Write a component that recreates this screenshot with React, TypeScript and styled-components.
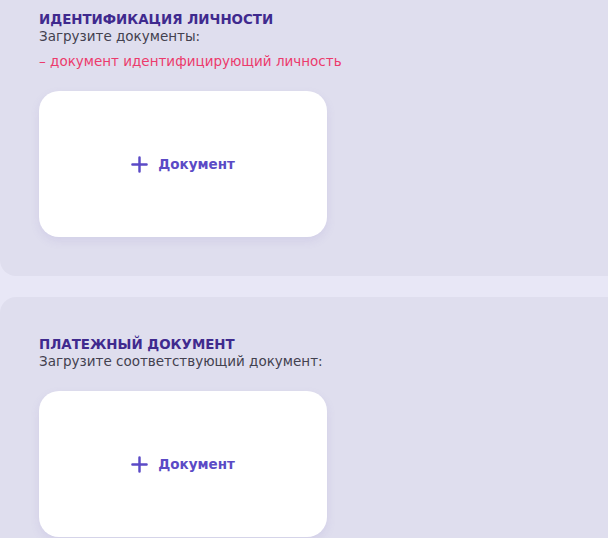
import styled, {createGlobalStyle} from "styled-components"

const GlobalStyle = createGlobalStyle`
  html, body {
    margin: 0;
    padding: 0;
    background: #e8e7f6;
    overflow: hidden;
  }
  body {
    font-family: "DejaVu Sans", "Noto Sans", sans-serif;
  }
`

const Page = styled.div`
  display: flex;
  flex-direction: column;
  gap: 21px;
  margin-right: -40px;
`

interface IPanelProps {
  $first?: boolean;
}

const Panel = styled.section<IPanelProps>`
  background: #dfdeee;
  border-radius: 16px;
  margin-top: ${({$first}) => $first ? "-28px" : "0"};
  padding: 40px 39px 39px;
`

const Title = styled.h2`
  color: #3f2a8e;
  font-size: 13.4px;
  font-weight: 700;
  line-height: 16px;
  margin: 0;
`

const Hint = styled.p`
  color: #43414f;
  font-size: 13.5px;
  line-height: 16px;
  margin: 0;
`

const Required = styled.p`
  color: #ec3a6c;
  font-size: 13.5px;
  line-height: 16px;
  margin: 9px 0 0;
`

const Uploads = styled.div`
  display: flex;
  gap: 16px;
  margin-top: 22px;
`

const UploadCard = styled.button`
  align-items: center;
  background: #ffffff;
  border: none;
  border-radius: 20px;
  box-shadow: 0 4px 10px rgba(120, 110, 190, 0.12);
  color: #5b4ac6;
  cursor: pointer;
  display: flex;
  font-family: inherit;
  font-size: 13.5px;
  font-weight: 700;
  gap: 10px;
  height: 146px;
  justify-content: center;
  padding: 0;
  width: 288px;
`

const PlusIcon = () => (
  <svg width="17" height="17" viewBox="0 0 18 18" fill="none">
    <path d="M9 1.5v15M1.5 9h15" stroke="#5b4ac6" strokeWidth="2.6" strokeLinecap="round" />
  </svg>
)

interface ISectionProps {
  title: string;
  hint: string;
  required?: string;
  first?: boolean;
}

const UploadSection = ({title, hint, required, first}: ISectionProps) => (
  <Panel $first={first}>
    <Title>{title}</Title>
    <Hint>{hint}</Hint>
    {required && <Required>{required}</Required>}
    <Uploads>
      <UploadCard>
        <PlusIcon />
        Документ
      </UploadCard>
    </Uploads>
  </Panel>
)

const App = () => (
  <>
    <GlobalStyle />
    <Page>
      <UploadSection
        first
        title="ИДЕНТИФИКАЦИЯ ЛИЧНОСТИ"
        hint="Загрузите документы:"
        required="– документ идентифицирующий личность"
      />
      <UploadSection
        title="ПЛАТЕЖНЫЙ ДОКУМЕНТ"
        hint="Загрузите соответствующий документ:"
      />
    </Page>
  </>
)

export default App
